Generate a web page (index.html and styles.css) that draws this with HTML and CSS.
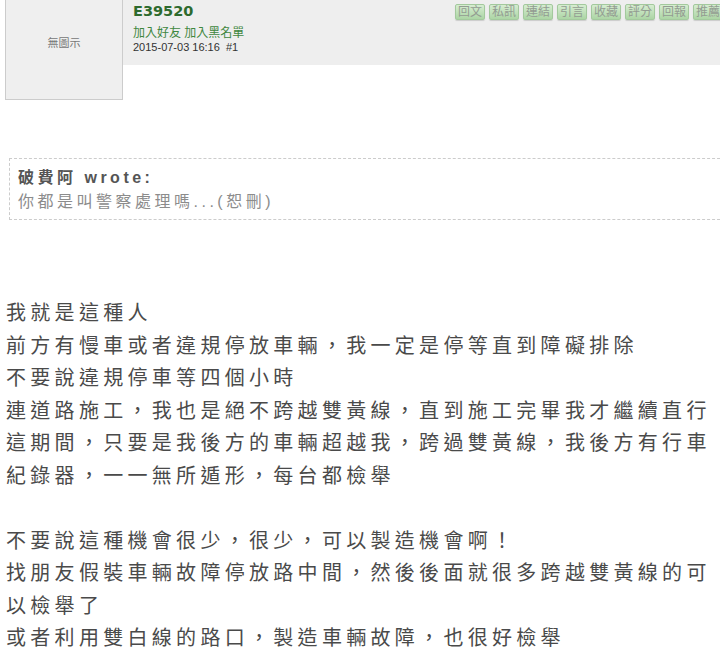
FILE: index.html
```html
<!DOCTYPE html>
<html lang="zh-Hant">
<head>
    <meta charset="UTF-8">
    <meta name="viewport" content="width=device-width, initial-scale=1.0">
    <title>E39520 - 討論區</title>
    <link rel="stylesheet" href="styles.css">
</head>
<body>
    <div class="page">
        <div class="post-head">
            <div class="avatar">
                <span>無圖示</span>
            </div>
            <div class="head-bar">
                <div class="author">
                    <div class="name">E39520</div>
                    <div class="links">
                        <a href="#">加入好友</a> <a href="#">加入黑名單</a>
                    </div>
                    <div class="date">2015-07-03 16:16 &nbsp;#1</div>
                </div>
                <div class="tools">
                    <a class="tool" href="#">回文</a>
                    <a class="tool" href="#">私訊</a>
                    <a class="tool" href="#">連結</a>
                    <a class="tool" href="#">引言</a>
                    <a class="tool" href="#">收藏</a>
                    <a class="tool" href="#">評分</a>
                    <a class="tool" href="#">回報</a>
                    <a class="tool" href="#">推薦</a>
                </div>
            </div>
        </div>

        <blockquote class="quote">
            <div class="quote-who">破費阿 wrote:</div>
            <div class="quote-text">你都是叫警察處理嗎...(恕刪)</div>
        </blockquote>

        <div class="content">
            我就是這種人<br>
            前方有慢車或者違規停放車輛，我一定是停等直到障礙排除<br>
            不要說違規停車等四個小時<br>
            連道路施工，我也是絕不跨越雙黃線，直到施工完畢我才繼續直行<br>
            這期間，只要是我後方的車輛超越我，跨過雙黃線，我後方有行車<br>
            紀錄器，一一無所遁形，每台都檢舉<br>
            <br>
            不要說這種機會很少，很少，可以製造機會啊！<br>
            找朋友假裝車輛故障停放路中間，然後後面就很多跨越雙黃線的可<br>
            以檢舉了<br>
            或者利用雙白線的路口，製造車輛故障，也很好檢舉
        </div>
    </div>
</body>
</html>
```

FILE: styles.css
```css
html, body {
    overflow: hidden;
}
body {
    margin: 0;
    padding: 0;
    background: #fff;
    font-family: "Liberation Sans", "Noto Sans CJK TC", sans-serif;
}
.page {
    width: 740px;
}
.post-head {
    display: flex;
    align-items: flex-start;
}
.avatar {
    margin-left: 5px;
    width: 116px;
    height: 99px;
    background: #efefef;
    border: 1px solid #ccc;
    border-top: none;
    text-align: center;
    flex-shrink: 0;
}
.avatar span {
    display: block;
    margin-top: 36px;
    font-size: 11px;
    line-height: 14px;
    color: #777;
}
.head-bar {
    flex: 1;
    height: 65px;
    background: #eee;
    display: flex;
    justify-content: space-between;
    padding: 0 17px 0 10px;
}
.name {
    padding-top: 2px;
    font-family: "DejaVu Sans", sans-serif;
    font-weight: bold;
    font-size: 14.5px;
    line-height: 18px;
    color: #2d6a2d;
}
.links {
    margin-top: 6px;
    font-size: 12px;
    line-height: 14px;
}
.links a {
    color: #3f873f;
    text-decoration: none;
}
.date {
    font-size: 11px;
    line-height: 14px;
    color: #333;
}
.tools {
    display: flex;
    gap: 4px;
    margin-top: 4px;
    height: 16px;
}
.tool {
    display: block;
    padding: 0 2px;
    height: 14px;
    line-height: 14px;
    font-size: 12px;
    color: #939c92;
    text-decoration: none;
    border: 1px solid #a3c99d;
    border-radius: 2px;
    background: linear-gradient(#d6edd1, #acd5a5);
    box-shadow: 0 1px 1px rgba(0, 0, 0, 0.15);
}
.quote {
    margin: 58px 0 0 9px;
    padding: 7px 8px 5px 8px;
    border: 1px dashed #ccc;
    font-size: 16px;
    letter-spacing: 3.5px;
}
.quote-who {
    line-height: 24px;
    font-weight: bold;
    color: #555;
}
.quote-text {
    line-height: 24px;
    color: #8c8c8c;
}
.content {
    margin-top: 76px;
    padding-left: 6px;
    font-family: "Noto Sans CJK TC", sans-serif;
    font-size: 20px;
    line-height: 32.5px;
    letter-spacing: 4.3px;
    color: #4a4a4a;
    white-space: nowrap;
}
```
